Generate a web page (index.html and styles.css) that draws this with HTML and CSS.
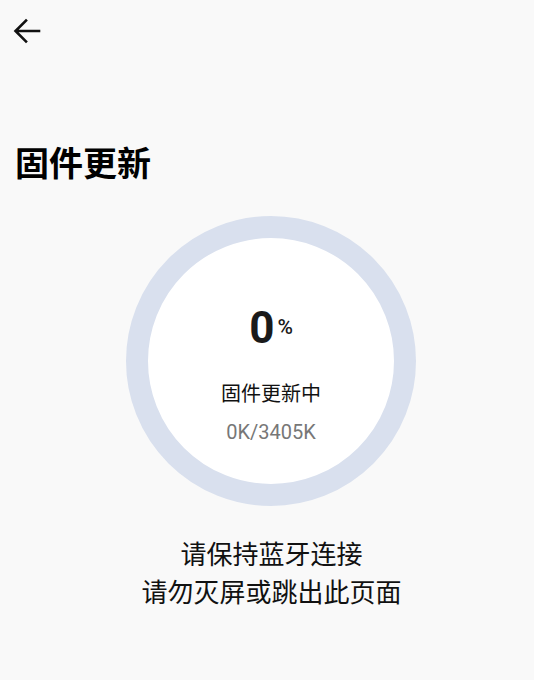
FILE: index.html
```html
<!DOCTYPE html>
<html>
<head>
<meta charset="utf-8">
<link rel="stylesheet" href="styles.css">
</head>
<body>
<div class="page">
  <header class="topbar">
    <svg class="back" width="28" height="28" viewBox="0 0 28 28">
      <path d="M26 14H3M13 3.5L2.5 14L13 24.5" fill="none" stroke="#111" stroke-width="2.6" stroke-linecap="square"/>
    </svg>
  </header>
  <h1 class="title">固件更新</h1>
  <div class="ring-wrap">
    <div class="ring">
      <div class="inner">
        <div class="pct"><span class="num">0</span><span class="sign">%</span></div>
        <div class="status">固件更新中</div>
        <div class="size">0K/3405K</div>
      </div>
    </div>
  </div>
  <div class="notice">
    <p>请保持蓝牙连接</p>
    <p>请勿灭屏或跳出此页面</p>
  </div>
</div>
</body>
</html>
```
FILE: styles.css
```css
html, body {
  margin: 0;
  padding: 0;
  background: #f9f9f9;
}
body {
  font-family: Roboto, "Noto Sans CJK SC", sans-serif;
  color: #111;
  width: 534px;
  height: 680px;
  overflow: hidden;
}
.page {
  display: flex;
  flex-direction: column;
}
.topbar {
  height: 62px;
  display: flex;
  align-items: center;
  padding-left: 13px;
}
.back {
  display: block;
}
.title {
  margin: 80px 0 0 15px;
  font-size: 34px;
  font-weight: 700;
  line-height: 44px;
  color: #000;
}
.ring-wrap {
  display: flex;
  justify-content: center;
  margin-top: 30px;
  padding-left: 8px;
}
.ring {
  width: 290px;
  height: 290px;
  box-sizing: border-box;
  border-radius: 50%;
  border: 22px solid #d9e0ee;
  background: #fff;
}
.inner {
  height: 100%;
  display: flex;
  flex-direction: column;
  align-items: center;
  padding-top: 64px;
  box-sizing: border-box;
}
.pct {
  display: flex;
  align-items: flex-start;
  height: 58px;
}
.num {
  font-size: 44px;
  font-weight: 700;
  line-height: 52px;
  color: #1a1a1a;
}
.sign {
  font-size: 21px;
  font-weight: 500;
  line-height: 22px;
  margin-top: 14px;
  margin-left: 3px;
  color: #1a1a1a;
}
.status {
  margin-top: 20px;
  font-size: 20px;
  line-height: 28px;
  color: #111;
}
.size {
  margin-top: 11px;
  font-size: 20px;
  line-height: 26px;
  color: #777;
}
.notice {
  margin-top: 30px;
  text-align: center;
  font-size: 26px;
  line-height: 38px;
  color: #111;
  padding-left: 9px;
}
.notice p {
  margin: 0;
}
```
